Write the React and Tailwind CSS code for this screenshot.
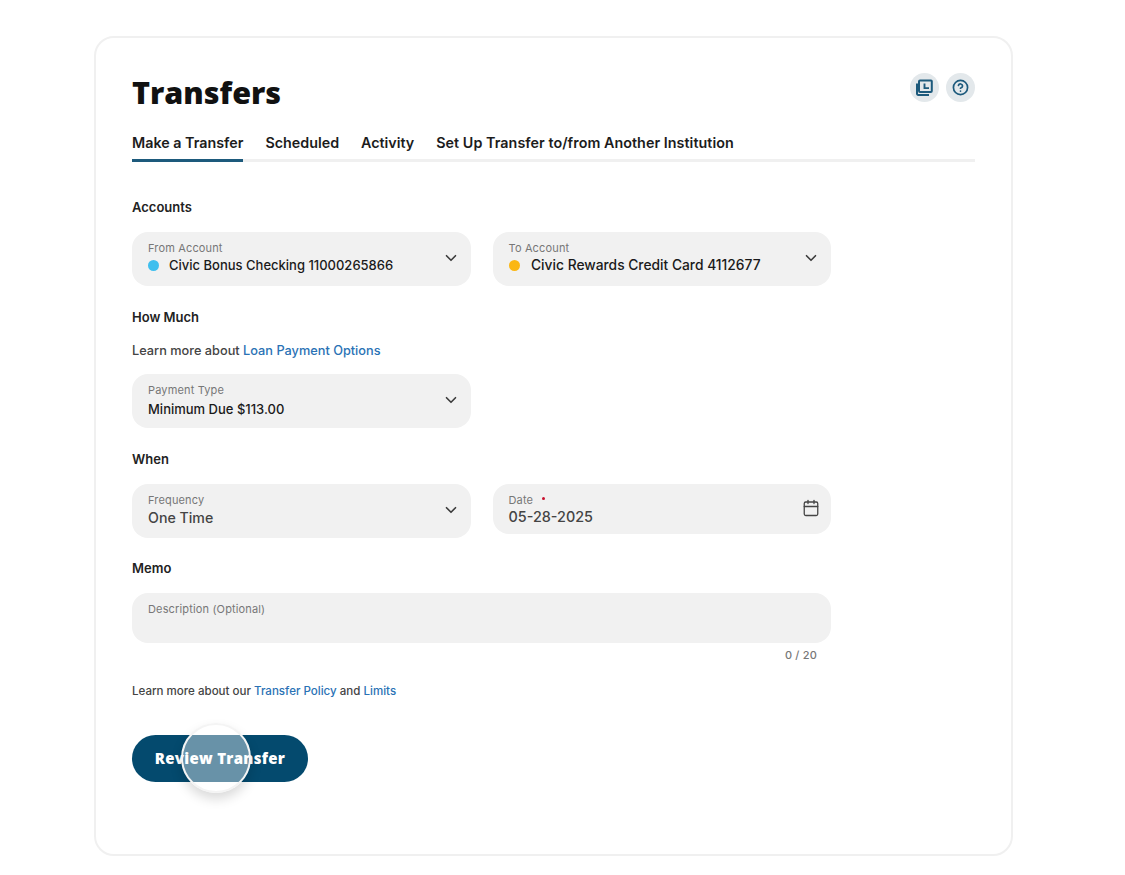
import { ChevronDown, Calendar, CircleHelp } from "lucide-react";

const font = "font-['Inter','Liberation_Sans',sans-serif]";

function Field({ label, value, dot, required, icon, valueClass, className }) {
  return (
    <div
      className={`flex items-start justify-between rounded-[16px] bg-[#f1f1f1] pl-[16px] pr-[11px] pt-[10px] ${className}`}
    >
      <div>
        <div className="flex items-center text-[11px] leading-[13px] tracking-[0.15px] text-[#777777]">
          {label}
          {required && (
            <span className="mb-[4px] ml-[9px] h-[3px] w-[3px] rounded-full bg-[#c8102e]"></span>
          )}
        </div>
        <div className={`flex items-center ${valueClass}`}>
          {dot && <span className={`h-[11px] w-[11px] rounded-full ${dot}`}></span>}
          {value}
        </div>
      </div>
      {icon}
    </div>
  );
}

const chevron = (
  <ChevronDown size={18} strokeWidth={2.2} className="mt-[7px] text-[#3c3c3c]" />
);

function SectionTitle({ children, className }) {
  return (
    <h3 className={`text-[13px] font-semibold leading-[16px] text-[#222222] ${className}`}>
      {children}
    </h3>
  );
}

export default function App() {
  return (
    <div className={`h-[875px] bg-white pl-[94px] pt-[36px] ${font}`}>
      <div className="h-[820px] w-[919px] rounded-[20px] border-2 border-[#f0f0f0] pl-[36px] pr-[36px] pt-[34px]">
        {/* Header */}
        <div className="flex h-[40px] items-center justify-between">
          <h1 className="font-['Open_Sans',sans-serif] text-[30.5px] font-extrabold leading-[40px] text-[#111111]">
            Transfers
          </h1>
          <div className="mb-[10px] flex gap-[7px]">
            <button className="flex h-[29px] w-[29px] items-center justify-center rounded-full bg-[#e3e8eb]">
              <svg width="17" height="17" viewBox="0 0 17 17" fill="none">
                <path d="M4 1.5h11a.8.8 0 0 1 .8.8v9.7a1 1 0 0 1-1 1H4a1 1 0 0 1-1-1V2.5a1 1 0 0 1 1-1z" stroke="#1d5a7c" strokeWidth="2" />
                <path d="M1 4.5v10.2a1.2 1.2 0 0 0 1.2 1.2H13" stroke="#1d5a7c" strokeWidth="2" />
                <path d="M8.5 4.5v4.6h4.5" stroke="#1d5a7c" strokeWidth="1.9" />
              </svg>
            </button>
            <button className="flex h-[29px] w-[29px] items-center justify-center rounded-full bg-[#e3e8eb]">
              <CircleHelp size={17} strokeWidth={2.4} className="text-[#1d5a7c]" />
            </button>
          </div>
        </div>

        {/* Tabs */}
        <div className="mt-[18px] flex h-[32px] gap-[22px] border-b-[3px] border-[#f0f0f0] text-[14.3px] font-semibold leading-[24px] text-[#1c1c1c]">
          <div className="h-[32px] border-b-[3px] border-[#1d5a7c] pt-[1px]">Make a Transfer</div>
          <div className="pt-[1px]">Scheduled</div>
          <div className="pt-[1px]">Activity</div>
          <div className="pt-[1px] tracking-[0.05px]">Set Up Transfer to/from Another Institution</div>
        </div>

        {/* Form */}
        <SectionTitle className="mt-[37px]">Accounts</SectionTitle>
        <div className="mt-[17px] flex gap-[22px]">
          <Field
            className="h-[54px] w-[338.5px]"
            label="From Account"
            value="Civic Bonus Checking 11000265866"
            dot="mr-[10px] bg-[#3fbfee]"
            valueClass="mt-[1px] text-[13px] leading-[18px] font-medium text-[#1a1a1a]"
            icon={chevron}
          />
          <Field
            className="h-[54px] w-[338.5px]"
            label="To Account"
            value="Civic Rewards Credit Card 4112677"
            dot="ml-[0.5px] mr-[11px] bg-[#fbb714]"
            valueClass="mt-[1px] text-[13.8px] leading-[18px] font-medium text-[#1a1a1a]"
            icon={chevron}
          />
        </div>

        <SectionTitle className="mt-[23px]">How Much</SectionTitle>
        <p className="mt-[18px] text-[12.75px] leading-[16px] font-medium text-[#444444]">
          Learn more about <span className="text-[#2a72b5]">Loan Payment Options</span>
        </p>
        <Field
          className="mt-[15px] h-[54px] w-[338.5px]"
          label="Payment Type"
          value="Minimum Due $113.00"
          valueClass="mt-[3px] text-[13px] leading-[18px] font-medium text-[#1a1a1a]"
          icon={chevron}
        />

        <SectionTitle className="mt-[23px]">When</SectionTitle>
        <div className="mt-[17px] flex items-start gap-[22px]">
          <Field
            className="h-[54px] w-[338.5px]"
            label="Frequency"
            value="One Time"
            valueClass="mt-[1px] text-[14.2px] leading-[20px] font-medium text-[#444444]"
            icon={chevron}
          />
          <Field
            className="h-[50px] w-[338.5px]"
            label="Date"
            required
            value="05-28-2025"
            valueClass="mt-[1px] text-[14.4px] leading-[18px] font-medium text-[#444444]"
            icon={<Calendar size={18} strokeWidth={1.7} className="mt-[5px] text-[#444444]" />}
          />
        </div>

        <SectionTitle className="mt-[22px]">Memo</SectionTitle>
        <Field
          className="mt-[17px] h-[50px] w-[699px]"
          label="Description (Optional)"
        />
        <div className="mt-[5px] w-[685px] text-right text-[11px] leading-[14px] font-medium tracking-[0.2px] text-[#777777]">
          0 / 20
        </div>

        <p className="mt-[21px] text-[11.55px] leading-[16px] font-medium text-[#444444]">
          Learn more about our <span className="text-[#2a72b5]">Transfer Policy</span> and{" "}
          <span className="text-[#2a72b5]">Limits</span>
        </p>

        {/* Button with touch indicator */}
        <div className="relative mt-[36px] w-[176px]">
          <button className="h-[47px] w-[176px] rounded-full bg-[#044a6e] font-['Open_Sans',sans-serif] text-[15px] font-extrabold tracking-[0.3px] text-white">
            Review Transfer
          </button>
          <div className="absolute left-[49px] top-[-12px] h-[70px] w-[70px] rounded-full border-2 border-[#f4f4f4] bg-white/40 shadow-[0_6px_12px_rgba(0,0,0,0.15)]"></div>
        </div>
      </div>
    </div>
  );
}
